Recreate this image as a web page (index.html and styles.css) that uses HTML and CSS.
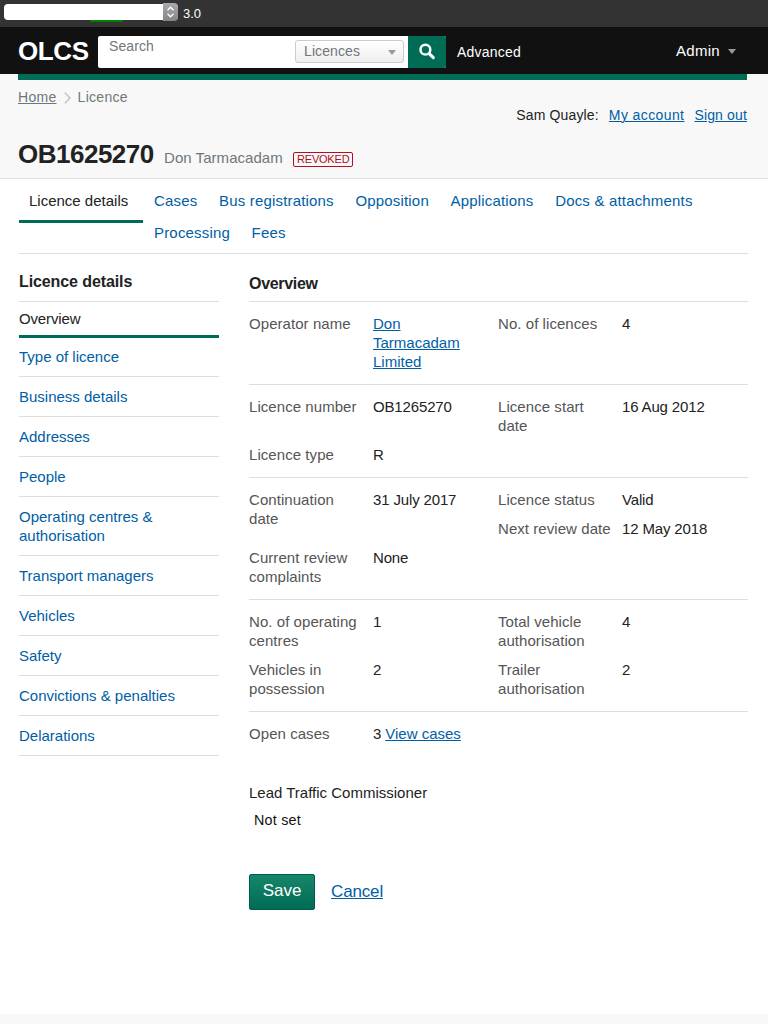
FILE: index.html
```html
<!DOCTYPE html>
<html lang="en">
<head>
<meta charset="utf-8">
<title>OLCS - Licence details</title>
<link rel="stylesheet" href="styles.css">
</head>
<body>
<div class="proto-bar">
  <div class="proto-select"><span class="proto-marker"></span><span class="proto-stepper"><svg width="15" height="18" viewBox="0 0 15 18"><path d="M4.5 7.3 7.5 4.2l3 3.1M4.5 10.7l3 3.1 3-3.1" fill="none" stroke="#fff" stroke-width="1.3"/></svg></span></div>
  <span class="proto-version">3.0</span>
</div>
<header class="header">
  <div class="logo">OLCS</div>
  <div class="search">
    <span class="search-placeholder">Search</span>
    <div class="search-select"><span>Licences</span><i class="caret"></i></div>
    <div class="search-button"><svg width="18" height="18" viewBox="0 0 18 18"><circle cx="7.4" cy="6.7" r="4.9" fill="none" stroke="#fff" stroke-width="2.5"/><path d="M11.2 10.6l4.1 4" stroke="#fff" stroke-width="3.1" stroke-linecap="round"/></svg></div>
  </div>
  <span class="advanced">Advanced</span>
  <div class="admin"><span>Admin</span><i class="caret"></i></div>
</header>
<section class="intro">
  <div class="intro-top">
    <nav class="crumbs"><a class="crumb-link" href="#">Home</a><svg class="chevron" width="7" height="12" viewBox="0 0 7 12"><path d="M.8.8 6 6 .8 11.2" fill="none" stroke="#bfc1c3" stroke-width="1.4"/></svg><span>Licence</span></nav>
    <div class="account"><span>Sam Quayle:</span><a class="link" href="#">My account</a><a class="link" href="#">Sign out</a></div>
  </div>
  <div class="title-row"><h1 class="title">OB1625270</h1><span class="subtitle">Don Tarmacadam</span><span class="status">REVOKED</span></div>
</section>
<main class="main">
  <nav class="tabs">
    <a class="tab tab-active" href="#">Licence details</a>
    <div class="tab-list">
      <a class="tab" href="#">Cases</a><a class="tab" href="#">Bus registrations</a><a class="tab" href="#">Opposition</a><a class="tab" href="#">Applications</a><a class="tab" href="#">Docs &amp; attachments</a><a class="tab" href="#">Processing</a><a class="tab" href="#">Fees</a>
    </div>
  </nav>
  <div class="columns">
    <aside class="side">
      <h2 class="side-title">Licence details</h2>
      <a class="side-item side-active" href="#">Overview</a>
      <a class="side-item" href="#">Type of licence</a>
      <a class="side-item" href="#">Business details</a>
      <a class="side-item" href="#">Addresses</a>
      <a class="side-item" href="#">People</a>
      <a class="side-item" href="#">Operating centres &amp; authorisation</a>
      <a class="side-item" href="#">Transport managers</a>
      <a class="side-item" href="#">Vehicles</a>
      <a class="side-item" href="#">Safety</a>
      <a class="side-item" href="#">Convictions &amp; penalties</a>
      <a class="side-item" href="#">Delarations</a>
    </aside>
    <div class="content">
      <h2 class="content-title">Overview</h2>
      <dl class="group"><dt>Operator name</dt><dd><a class="link" href="#">Don Tarmacadam Limited</a></dd><dt>No. of licences</dt><dd>4</dd></dl>
      <dl class="group"><dt>Licence number</dt><dd>OB1265270</dd><dt>Licence start date</dt><dd>16 Aug 2012</dd><dt>Licence type</dt><dd>R</dd></dl>
      <dl class="group"><dt class="tall">Continuation date</dt><dd class="tall">31 July 2017</dd><dt>Licence status</dt><dd>Valid</dd><dt class="third">Next review date</dt><dd>12 May 2018</dd><dt>Current review complaints</dt><dd>None</dd></dl>
      <dl class="group"><dt>No. of operating centres</dt><dd>1</dd><dt>Total vehicle authorisation</dt><dd>4</dd><dt>Vehicles in possession</dt><dd>2</dd><dt>Trailer authorisation</dt><dd>2</dd></dl>
      <dl class="group"><dt>Open cases</dt><dd>3 <a class="link" href="#">View cases</a></dd></dl>
      <div class="field"><div class="field-label">Lead Traffic Commissioner</div><div class="field-value">Not set</div></div>
      <div class="actions"><button class="save">Save</button><a class="link cancel" href="#">Cancel</a></div>
    </div>
  </div>
</main>
<footer class="footer"></footer>
</body>
</html>
```
FILE: styles.css
```css
* { box-sizing: border-box; }
body {
  margin: 0;
  height: 1024px;
  display: flex;
  flex-direction: column;
  overflow: hidden;
  background: #fff;
  color: #222;
  font: 15px/19px "Liberation Sans", Arial, sans-serif;
}
h1, h2, dl, dd { margin: 0; }
a { color: #005ea5; text-decoration: none; }
svg { display: block; }
.link { text-decoration: underline; text-underline-offset: 1px; text-decoration-thickness: 1px; }
.caret { border: 5px solid transparent; border-top-color: #999; border-bottom: 0; border-left-width: 4.5px; border-right-width: 4.5px; }

.proto-bar { height: 27px; background: #333; display: flex; align-items: flex-start; gap: 5px; padding: 3px 4px; color: #fff; }
.proto-select { position: relative; width: 174px; height: 16px; margin-top: 1px; border-radius: 4px; background: #fff; }
.proto-marker { position: absolute; left: 86px; top: 16px; width: 33px; height: 2px; border-radius: 1px; background: #008000; }
.proto-stepper { position: absolute; right: 0; top: -1px; width: 15px; height: 18px; background: linear-gradient(#aaaaad, #858589); border-radius: 0 4px 4px 0; }
.proto-version { font-size: 13px; line-height: 21px; }

.header { height: 47px; background: #111; color: #fff; display: flex; align-items: flex-start; padding: 9px 32px 0 18px; }
.logo { width: 80px; font-size: 26px; line-height: 30px; font-weight: bold; letter-spacing: -0.4px; }
.search { width: 348px; height: 32px; background: #fff; border-radius: 2px; display: flex; overflow: hidden; color: #6f777b; font-size: 14px; }
.search-placeholder { width: 197px; padding: 1px 0 0 11px; letter-spacing: 0.1px; }
.search-select { width: 109px; height: 23px; margin: 4px 4px 0 0; padding: 0 7px 0 8px; border: 1px solid #ccc; border-radius: 3px; background: linear-gradient(#fff, #eee); display: flex; align-items: center; justify-content: space-between; letter-spacing: 0.1px; }
.search-select .caret { margin-top: 2px; }
.search-button { width: 38px; background: #006c56; padding: 7px 0 0 10px; }
.advanced { font-size: 14px; margin: 7px 0 0 11px; letter-spacing: 0.2px; }
.admin { display: flex; align-items: center; gap: 8px; margin: 5px 0 0 auto; letter-spacing: 0.3px; }
.admin .caret { margin-top: 1px; }

.intro { height: 105px; padding: 0 21px 0 18px; background: #f8f8f8; border-bottom: 1px solid #dedede; }
.intro-top { border-top: 6px solid #006c56; height: 53px; display: flex; justify-content: space-between; font-size: 14px; }
.crumbs { display: flex; align-items: flex-start; color: #6f777b; padding-top: 8px; letter-spacing: 0.3px; }
.crumb-link { color: #6f777b; text-decoration: underline; text-underline-offset: 1px; }
.chevron { margin: 4px 7px 0 7px; }
.account { display: flex; gap: 10px; padding-top: 26px; letter-spacing: 0.15px; }
.account .link:nth-child(2) { letter-spacing: 0.4px; }
.title-row { display: flex; align-items: baseline; padding-top: 12px; }
.title { font-size: 26px; line-height: 30px; letter-spacing: -0.5px; width: 146px; }
.subtitle { color: #6f777b; width: 129px; letter-spacing: 0.05px; }
.status { border: 1px solid #b10e1e; border-radius: 2px; color: #b10e1e; font-size: 11px; line-height: 13px; padding: 0 3px; width: 60px; white-space: nowrap; letter-spacing: -0.2px; }

.main { flex: 1; padding: 0 20px 0 19px; }
.main .tabs { height: 75px; border-bottom: 1px solid #dedede; display: flex; align-items: flex-start; padding-top: 8px; }
.tab { line-height: 28px; height: 32px; white-space: nowrap; }
.tab-active { color: #222; width: 124px; height: 36px; padding-left: 10px; border-bottom: 3px solid #006c56; }
.tab-list { flex: 1; display: flex; flex-wrap: wrap; column-gap: 21.6px; padding-left: 11px; letter-spacing: 0.18px; }

.columns { display: flex; gap: 30px; }
.side { width: 200px; }
.side-title { font-size: 16px; line-height: 20px; padding: 18px 0 9px; border-bottom: 1px solid #dedede; letter-spacing: -0.1px; }
.side-item { display: block; padding: 10px 0; border-bottom: 1px solid #dedede; }
.side-active { padding: 7px 0; color: #222; border-bottom: 3px solid #006c56; letter-spacing: -0.15px; }
.side-active + .side-item { padding-top: 9px; }
.content { width: 499px; }
.content-title { font-size: 16px; line-height: 20px; padding: 20px 0 7px; letter-spacing: -0.3px; }
.group { border-top: 1px solid #dedede; padding: 12px 0 13px; display: grid; grid-template-columns: 124px 125px 124px 126px; row-gap: 10px; }
.group dt { color: #555; padding-right: 9px; letter-spacing: 0.06px; }
.group dd { padding-right: 10px; letter-spacing: -0.15px; }
.group .link { letter-spacing: 0; }
.tall { grid-row: span 2; }
.group .third { grid-column: 3; padding-right: 0; }
.field { padding-top: 27px; }
.field-value { padding: 9px 0 0 5px; color: #111; font-size: 14.3px; letter-spacing: 0.25px; }
.actions { display: flex; align-items: flex-start; gap: 16px; padding-top: 44px; font-size: 17px; }
.save { width: 66px; height: 36px; border: 1px solid #005f4b; border-radius: 2px; padding: 0 0 3px; background: linear-gradient(#168669, #006c56); color: #fff; font: inherit; }
.cancel { line-height: 20px; padding-top: 8px; letter-spacing: -0.15px; }
.footer { height: 10px; background: #f8f8f8; }
```
